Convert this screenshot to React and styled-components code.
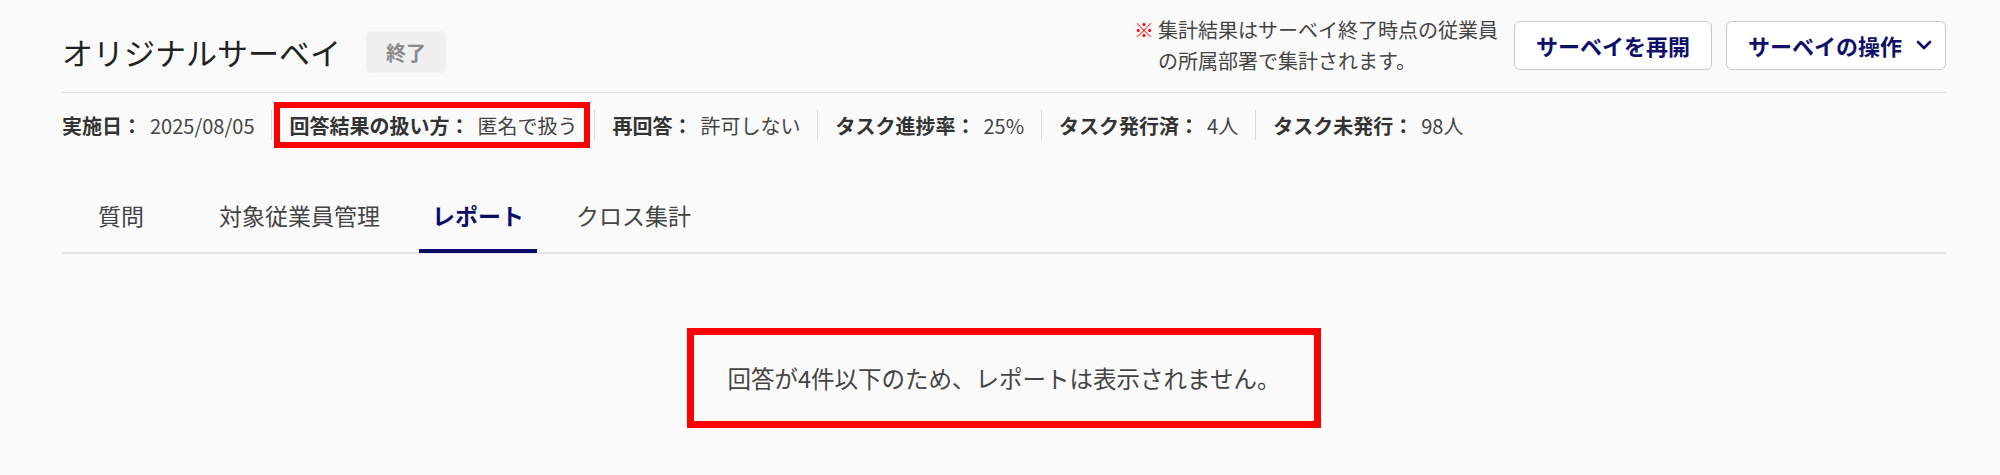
import React from 'react';
import styled, { createGlobalStyle } from 'styled-components';

const GlobalStyle = createGlobalStyle`
  body {
    margin: 0;
    background: #fafafa;
    font-family: "Noto Sans CJK JP", "Noto Sans", sans-serif;
    color: #333;
  }
`;

const Page = styled.div`
  padding: 14px 54px 0 62px;
`;

const Header = styled.header`
  display: flex;
  justify-content: space-between;
  align-items: center;
  padding-bottom: 16px;
  border-bottom: 1px solid #dedede;
`;

const TitleGroup = styled.div`
  display: flex;
  align-items: center;
  gap: 25px;
  padding-top: 14px;
`;

const Title = styled.h1`
  margin: 0;
  font-size: 31px;
  font-weight: 400;
  color: #222;
  line-height: 42px;
`;

const StatusBadge = styled.span`
  display: inline-flex;
  align-items: center;
  height: 42px;
  padding: 0 20px;
  border-radius: 5px;
  background: #f0f0f0;
  color: #8a8a8a;
  font-size: 20px;
  font-weight: 700;
`;

const Actions = styled.div`
  display: flex;
  align-items: center;
  gap: 14px;
`;

const Note = styled.p`
  display: flex;
  gap: 4px;
  margin: 0 2px 0 0;
  font-size: 20px;
  line-height: 31px;
  color: #444;
`;

const NoteMark = styled.span`
  color: #f00;
`;

const Button = styled.button`
  display: inline-flex;
  align-items: center;
  gap: 14px;
  height: 49px;
  padding: 0 ${(p) => (p.$menu ? '13px' : '21px')} 0 21px;
  border: 1px solid #c8c8c8;
  border-radius: 6px;
  background: #fff;
  color: #0f0f6b;
  font-family: inherit;
  font-size: 22px;
  font-weight: 700;
  cursor: pointer;
`;

const MetaRow = styled.div`
  display: flex;
  align-items: center;
  padding-top: 17px;
`;

const MetaItem = styled.div`
  position: relative;
  display: flex;
  align-items: center;
  gap: 8px;
  height: 30px;
  padding: 0 17px;
  border-left: 1px solid #dadada;
  font-size: 20px;

  &:first-child {
    padding-left: 0;
    border-left: none;
  }

  ${(p) =>
    p.$highlight &&
    `
    &::after {
      content: '';
      position: absolute;
      top: -8px;
      bottom: -8px;
      left: 2px;
      right: 4px;
      border: 6px solid #ff0000;
    }
  `}
`;

const MetaLabel = styled.span`
  font-weight: 700;
  color: #333;
`;

const MetaValue = styled.span`
  color: #444;
`;

const Tabs = styled.nav`
  display: flex;
  gap: 26px;
  margin-top: 40px;
  border-bottom: 2px solid #e4e4e4;
`;

const Tab = styled.div`
  display: flex;
  align-items: center;
  justify-content: center;
  box-sizing: border-box;
  min-width: 118px;
  height: 73px;
  margin-bottom: -1px;
  padding: 0 13px;
  border-bottom: 4px solid ${(p) => (p.$active ? '#0d0d66' : 'transparent')};
  font-size: 23px;
  font-weight: ${(p) => (p.$active ? 700 : 400)};
  color: ${(p) => (p.$active ? '#0d0d66' : '#444')};
  cursor: pointer;
`;

const EmptyMessage = styled.div`
  display: flex;
  align-items: center;
  justify-content: center;
  box-sizing: border-box;
  width: 634px;
  height: 100px;
  margin: 74px auto 0;
  border: 7px solid #ff0000;
  font-size: 23.5px;
  color: #444;
`;

const Chevron = () => (
  <svg width="16" height="10" viewBox="0 0 16 10" fill="none">
    <path d="M2 2l6 6 6-6" stroke="#0f0f6b" strokeWidth="2.6" strokeLinecap="round" strokeLinejoin="round" />
  </svg>
);

const meta = [
  { label: '実施日：', value: '2025/08/05' },
  { label: '回答結果の扱い方：', value: '匿名で扱う', highlight: true },
  { label: '再回答：', value: '許可しない' },
  { label: 'タスク進捗率：', value: '25%' },
  { label: 'タスク発行済：', value: '4人' },
  { label: 'タスク未発行：', value: '98人' },
];

const tabs = ['質問', '対象従業員管理', 'レポート', 'クロス集計'];

const App = () => {
  return (
    <React.Fragment>
      <GlobalStyle />
      <Page>
        <Header>
          <TitleGroup>
            <Title>オリジナルサーベイ</Title>
            <StatusBadge>終了</StatusBadge>
          </TitleGroup>
          <Actions>
            <Note>
              <NoteMark>※</NoteMark>
              <span>
                集計結果はサーベイ終了時点の従業員
                <br />
                の所属部署で集計されます。
              </span>
            </Note>
            <Button>サーベイを再開</Button>
            <Button $menu>
              サーベイの操作
              <Chevron />
            </Button>
          </Actions>
        </Header>
        <MetaRow>
          {meta.map((m) => (
            <MetaItem key={m.label} $highlight={m.highlight}>
              <MetaLabel>{m.label}</MetaLabel>
              <MetaValue>{m.value}</MetaValue>
            </MetaItem>
          ))}
        </MetaRow>
        <Tabs>
          {tabs.map((t) => (
            <Tab key={t} $active={t === 'レポート'}>
              {t}
            </Tab>
          ))}
        </Tabs>
        <EmptyMessage>回答が4件以下のため、レポートは表示されません。</EmptyMessage>
      </Page>
    </React.Fragment>
  );
};

export default App;
